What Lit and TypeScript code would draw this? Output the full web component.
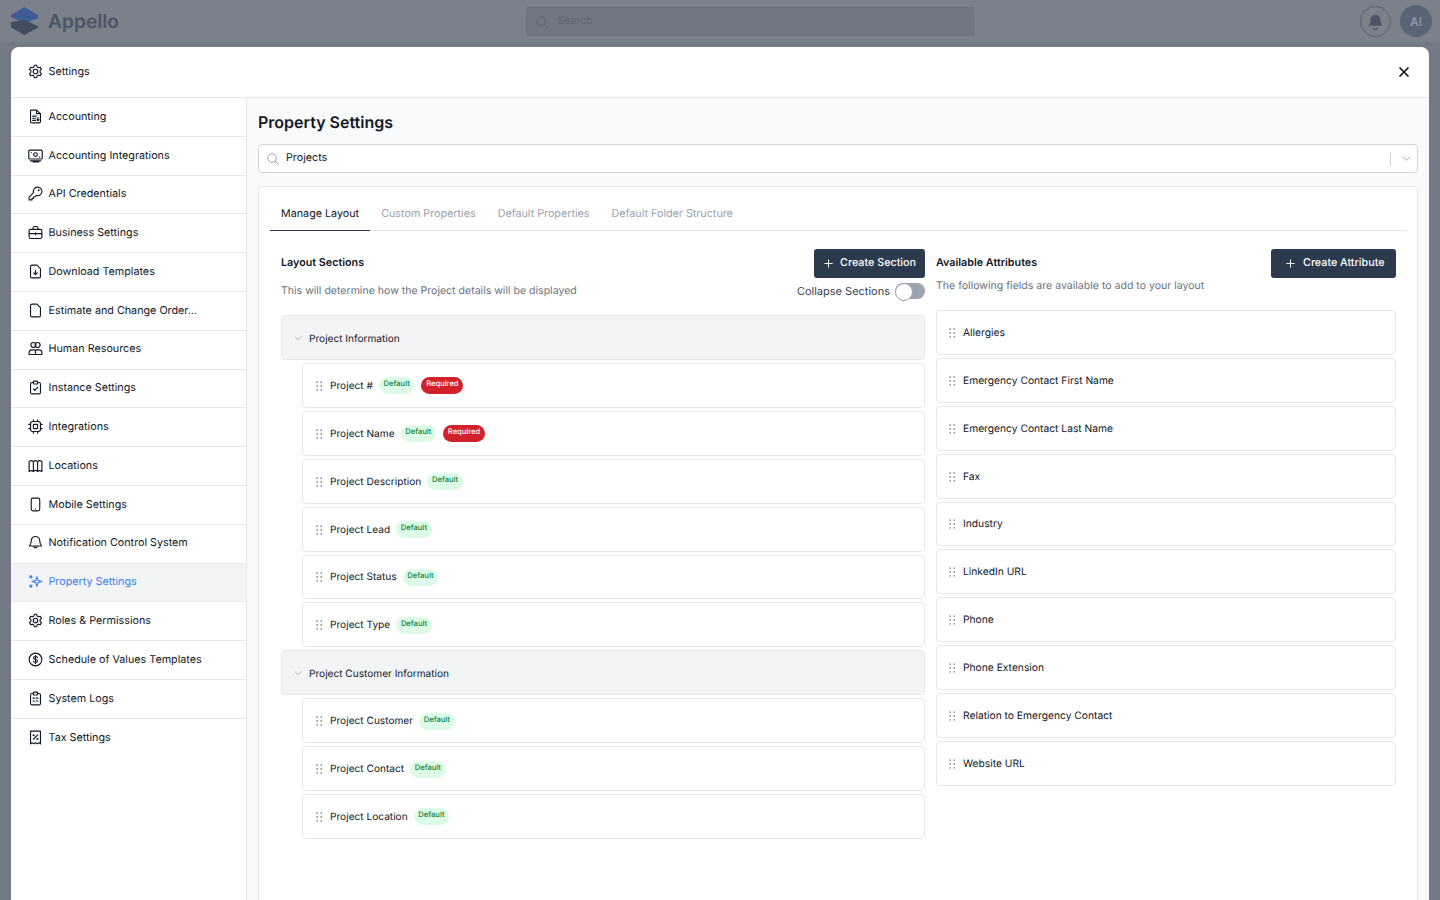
import { LitElement, css, html, svg } from "lit";
import { customElement } from "lit/decorators.js";

const icons: Record<string, unknown> = {
  gear: svg`<path d="M10.300 3.200h3.400l.6 2.600 1.900 1 2.500-.8 1.700 3-1.900 1.800v2.400l1.900 1.800-1.700 3-2.500-.8-1.900 1-.6 2.600h-3.400l-.6-2.600-1.900-1-2.500.8-1.700-3 1.900-1.800v-2.400L3.600 9l1.700-3 2.500.8 1.900-1z"/><circle cx="12" cy="12" r="3.200"/>`,
  doc: svg`<path d="M5.500 3h8l5.500 5v11a2 2 0 0 1-2 2H7a2 2 0 0 1-2-2V3.500z"/><path d="M13.500 3.500V8H19M8 11.500h5M8 14.500h4M8 17.500h4M15.500 13v5M14 16.500l1.500 1.500 1.500-1.500"/>`,
  screen: svg`<rect x="2.500" y="4.500" width="19" height="12.500" rx="1.500"/><circle cx="12" cy="10.700" r="2.600"/><path d="M6 7.500v0M18 14v0M4.500 19.500h15M8.500 21h8"/>`,
  key: svg`<path d="M15 3a6 6 0 1 1-1.800 11.700L11 17H9v2H7v2H3v-3.800l6.300-6.300A6 6 0 0 1 15 3z"/><circle cx="16.500" cy="7.500" r=".6"/>`,
  case: svg`<rect x="3" y="7.500" width="18" height="13" rx="2"/><path d="M8.500 7.500V5.500a2 2 0 0 1 2-2h3a2 2 0 0 1 2 2v2M3 13.500h18M12 12.500v2.500"/>`,
  download: svg`<path d="M7 3h7l5 5v11a2 2 0 0 1-2 2H7a2 2 0 0 1-2-2V5a2 2 0 0 1 2-2z"/><path d="M12 10.500v6M9.500 14l2.500 2.500 2.500-2.500"/>`,
  file: svg`<path d="M7 3h7l5 5v11a2 2 0 0 1-2 2H7a2 2 0 0 1-2-2V5a2 2 0 0 1 2-2z"/>`,
  people: svg`<circle cx="9" cy="7" r="3.500"/><circle cx="15" cy="7" r="3.500"/><path d="M3 20.500v-2.500a4 4 0 0 1 4-4h3a3 3 0 0 1 2 1 3 3 0 0 1 2-1h3a4 4 0 0 1 4 4v2.500zM12 15v5.500"/>`,
  clipboard: svg`<path d="M9 5H7a2 2 0 0 0-2 2v12a2 2 0 0 0 2 2h10a2 2 0 0 0 2-2V7a2 2 0 0 0-2-2h-2"/><rect x="9" y="3" width="6" height="4" rx="1"/><path d="M9 14l2 2 4-4"/>`,
  chip: svg`<rect x="5" y="5" width="14" height="14" rx="3"/><rect x="9" y="9" width="6" height="6" rx="1"/><path d="M9 2.500V5M15 2.500V5M9 19v2.500M15 19v2.500M2.500 9H5M2.500 15H5M19 9h2.500M19 15h2.500"/>`,
  map: svg`<path d="M3 6.500c2.500-2 4-2 6 0v14c-2-2-3.500-2-6 0zM9 6.500c2-2 4-2 6 0v14c-2-2-4-2-6 0zM15 6.500c2-2 3.500-2 6 0v14c-2.500-2-4-2-6 0z"/>`,
  phone: svg`<rect x="6" y="3" width="12" height="18" rx="2.500"/><path d="M12 18.200v0"/>`,
  bell: svg`<path d="M12 3.500a6 6 0 0 0-6 6c0 5-2.500 6.500-2.500 7.500h17c0-1-2.500-2.500-2.500-7.500a6 6 0 0 0-6-6zM9.500 17a2.500 2.500 0 0 0 5 0"/>`,
  spark: svg`<path d="M14 5l1.600 5.400L21 12l-5.400 1.600L14 19l-1.600-5.400L7 12l5.400-1.600z"/><circle cx="5.500" cy="5.500" r="1.500" fill="currentColor"/><circle cx="5.500" cy="18.500" r="1.500" fill="currentColor"/>`,
  dollar: svg`<circle cx="12" cy="12" r="9"/><path d="M14.800 9.200c-.4-1-1.500-1.500-2.800-1.500-1.600 0-2.800.8-2.800 2.100 0 3 5.700 1.500 5.700 4.400 0 1.300-1.300 2.100-2.900 2.100-1.400 0-2.500-.6-2.900-1.600M12 6v12"/>`,
  logs: svg`<path d="M9 5H7a2 2 0 0 0-2 2v12a2 2 0 0 0 2 2h10a2 2 0 0 0 2-2V7a2 2 0 0 0-2-2h-2"/><rect x="9" y="3" width="6" height="4" rx="1"/><path d="M8.500 11.500h2M13 11.500h2.500M8.500 15.500h2M13 15.500h2.500"/>`,
  receipt: svg`<path d="M5 3h14v18l-2.300-1.500L14.300 21 12 19.500 9.700 21l-2.400-1.500L5 21z"/><path d="M9 14.500l6-6"/><circle cx="9.300" cy="8.800" r=".7"/><circle cx="14.700" cy="14.200" r=".7"/>`,
};

const nav: [string, string][] = [
  ["Accounting", "doc"],
  ["Accounting Integrations", "screen"],
  ["API Credentials", "key"],
  ["Business Settings", "case"],
  ["Download Templates", "download"],
  ["Estimate and Change Order...", "file"],
  ["Human Resources", "people"],
  ["Instance Settings", "clipboard"],
  ["Integrations", "chip"],
  ["Locations", "map"],
  ["Mobile Settings", "phone"],
  ["Notification Control System", "bell"],
  ["Property Settings", "spark"],
  ["Roles & Permissions", "gear"],
  ["Schedule of Values Templates", "dollar"],
  ["System Logs", "logs"],
  ["Tax Settings", "receipt"],
];

const sections = [
  {
    name: "Project Information",
    fields: [
      ["Project #", true],
      ["Project Name", true],
      ["Project Description", false],
      ["Project Lead", false],
      ["Project Status", false],
      ["Project Type", false],
    ],
  },
  {
    name: "Project Customer Information",
    fields: [
      ["Project Customer", false],
      ["Project Contact", false],
      ["Project Location", false],
    ],
  },
];

const attributes = [
  "Allergies",
  "Emergency Contact First Name",
  "Emergency Contact Last Name",
  "Fax",
  "Industry",
  "LinkedIn URL",
  "Phone",
  "Phone Extension",
  "Relation to Emergency Contact",
  "Website URL",
];

const grip = html`<svg class="grip" viewBox="0 0 7 10" fill="#8b929e">
  <circle cx="1.200" cy="1.200" r=".9" /><circle cx="5.200" cy="1.200" r=".9" />
  <circle cx="1.200" cy="5" r=".9" /><circle cx="5.200" cy="5" r=".9" />
  <circle cx="1.200" cy="8.800" r=".9" /><circle cx="5.200" cy="8.800" r=".9" />
</svg>`;

const chevron = html`<svg class="chev" viewBox="0 0 12 12" fill="none" stroke="currentColor" stroke-width="1">
  <path d="M2 4l4 4 4-4" />
</svg>`;

const plus = html`<svg class="plus" viewBox="0 0 12 12" fill="none" stroke="currentColor" stroke-width="1">
  <path d="M6 1.500v9M1.500 6h9" />
</svg>`;

const search = html`<svg class="search" viewBox="0 0 12 12" fill="none" stroke="currentColor" stroke-width="1">
  <circle cx="5" cy="5" r="4.300" /><path d="M8 8l3.700 3.700" />
</svg>`;

function icon(name: string) {
  return html`<svg class="icon" viewBox="0 0 24 24" fill="none" stroke="currentColor" stroke-width="1.600"
    stroke-linecap="round" stroke-linejoin="round">${icons[name]}</svg>`;
}

@customElement("app-root")
export class AppRoot extends LitElement {
  static styles = css`
    * {
      margin: 0;
      padding: 0;
      box-sizing: border-box;
    }

    :host {
      display: block;
      position: relative;
      height: 900px;
      overflow: hidden;
      background: #737a84;
      font-family: Inter, "Liberation Sans", sans-serif;
      font-size: 10.750px;
      color: #111827;
      text-rendering: geometricPrecision;
    }

    .top {
      height: 42px;
      display: grid;
      grid-template-columns: 515px 448px 1fr;
      align-items: center;
      padding: 0 8px 0 11px;
      background: #7a818b;
    }

    .brand {
      display: flex;
      align-items: center;
      gap: 10px;
      font-size: 19.200px;
      font-weight: 600;
      color: #4b5564;
    }

    .brand svg {
      width: 27px;
      height: 28px;
    }

    .top-search {
      height: 29px;
      margin-top: 1px;
      display: flex;
      align-items: center;
      gap: 9px;
      padding-left: 9px;
      border: 1px solid #697180;
      border-radius: 2px;
      background: #707783;
      color: #5b6472;
    }

    .top-search span {
      padding-bottom: 3px;
    }

    .top-right {
      display: flex;
      justify-content: flex-end;
      align-items: center;
      gap: 9px;
    }

    .bell {
      width: 31px;
      height: 31px;
      display: flex;
      align-items: center;
      justify-content: center;
      border: 1px solid #5b6472;
      border-radius: 50%;
      color: #4b5564;
    }

    .bell svg {
      width: 17px;
      height: 17px;
    }

    .avatar {
      width: 32px;
      height: 32px;
      display: flex;
      align-items: center;
      justify-content: center;
      border-radius: 50%;
      background: #5a6475;
      color: #8a94a3;
      font-size: 12px;
      font-weight: 600;
    }

    .modal {
      position: absolute;
      left: 11px;
      right: 11px;
      top: 47px;
      height: 900px;
      border-radius: 8px 8px 0 0;
      background: #fff;
      overflow: hidden;
    }

    .modal-head {
      height: 51px;
      display: flex;
      align-items: center;
      justify-content: space-between;
      padding: 0 18px 2px 15.500px;
      border-bottom: 1px solid #e5e7eb;
    }

    .modal-title {
      display: flex;
      align-items: center;
      gap: 5px;
    }

    .icon {
      width: 17px;
      height: 17px;
      flex: none;
    }

    .close {
      width: 14px;
      height: 14px;
      margin-top: 2px;
    }

    .modal-body {
      display: flex;
      height: 100%;
    }

    .side {
      width: 236px;
      flex: none;
      border-right: 1px solid #e5e7eb;
    }

    .side-row {
      height: 38.800px;
      display: flex;
      align-items: center;
      gap: 5px;
      padding: 0 0 1.400px 15.500px;
      border-bottom: 1px solid #e5e7eb;
    }

    .side-row:last-child {
      border-bottom: 0;
    }

    .side-row.active {
      background: #f3f4f6;
      color: #3b82f6;
    }

    .main {
      flex: 1;
      min-width: 0;
      padding: 0 11px;
      background: #f9fafb;
    }

    h1 {
      height: 46px;
      display: flex;
      align-items: center;
      padding-top: 2px;
      font-size: 16px;
      font-weight: 600;
    }

    .select {
      height: 29px;
      display: flex;
      align-items: center;
      padding-left: 8px;
      border: 1px solid #d1d5db;
      border-radius: 4px;
      background: #fff;
      color: #111827;
    }

    .search {
      width: 12px;
      height: 12px;
      color: #9ca3af;
      flex: none;
    }

    .top-search .search {
      color: #5b6472;
    }

    .select span {
      flex: 1;
      margin-left: 7px;
      padding-bottom: 3px;
    }

    .select i {
      width: 1px;
      height: 14px;
      background: #d1d5db;
    }

    .chev {
      width: 11px;
      height: 11px;
      color: #9ca3af;
    }

    .select .chev {
      margin: 0 5px 0 10px;
    }

    .card {
      margin-top: 13px;
      height: 800px;
      padding: 11px 10px 0 11px;
      border: 1px solid #e5e7eb;
      border-radius: 4px 4px 0 0;
      background: #fff;
    }

    .tabs {
      display: flex;
      height: 33px;
      border-bottom: 1px solid #e5e7eb;
    }

    .tab {
      height: 33px;
      padding: 0 11px 1.500px;
      display: flex;
      align-items: center;
      border-bottom: 1px solid transparent;
      color: #9ca3af;
    }

    .tab.on {
      color: #111827;
      border-bottom-color: #2b3a4d;
    }

    .cols {
      display: grid;
      grid-template-columns: 644px 460px;
      gap: 11px;
      padding: 18px 11px 0;
    }

    .col-head {
      display: flex;
      justify-content: space-between;
      align-items: center;
      height: 29px;
    }

    .col-title {
      font-weight: 600;
      padding-bottom: 3px;
    }

    .btn {
      height: 29px;
      display: flex;
      align-items: center;
      gap: 6px;
      padding: 0 9px 3px 9px;
      border-radius: 3px;
      background: #2b3a4d;
      color: #fff;
      font-weight: 500;
    }

    .btn.wide {
      gap: 7px;
      padding: 0 11.500px 3px 14.500px;
    }

    .plus {
      width: 11px;
      height: 11px;
      margin-top: 3px;
    }

    .col-sub {
      display: flex;
      justify-content: space-between;
      align-items: flex-start;
      font-size: 10.550px;
      color: #6b7280;
    }

    .col-sub > span {
      padding-top: 0.700px;
    }

    .left .col-sub {
      height: 37px;
      padding-top: 5px;
    }

    .right .col-sub {
      height: 32px;
    }

    .collapse {
      display: flex;
      align-items: center;
      gap: 5px;
      font-size: 11px;
      color: #374151;
    }

    .toggle {
      width: 30px;
      height: 16px;
      border-radius: 8px;
      background: #9ca3af;
    }

    .toggle::before {
      content: "";
      display: block;
      width: 16px;
      height: 16px;
      border: 1px solid #9ca3af;
      border-radius: 50%;
      background: #fff;
    }

    .section {
      height: 45px;
      display: flex;
      align-items: center;
      gap: 6px;
      margin-bottom: 3px;
      padding: 2.200px 0 0 11px;
      border: 1px solid #e5e7eb;
      border-radius: 4px;
      background: #f3f4f6;
      font-size: 10.100px;
    }

    .section .chev {
      width: 10px;
      height: 10px;
      margin-top: -2px;
    }

    .fields {
      display: flex;
      flex-direction: column;
      gap: 3px;
    }

    .fields.nested {
      padding-left: 21px;
      margin-bottom: 3px;
    }

    .field {
      height: 44.900px;
      display: flex;
      align-items: center;
      padding: 0.800px 0 0 13px;
      border: 1px solid #e5e7eb;
      border-radius: 4px;
      background: #fff;
      font-size: 10.150px;
    }

    .right .field {
      padding-left: 12px;
      font-size: 10.250px;
    }

    .grip {
      width: 7px;
      height: 10px;
      margin-right: 7px;
      flex: none;
    }

    .badge {
      height: 17px;
      display: flex;
      padding: 2px 4.700px 0;
      border-radius: 9px;
      font-size: 7.600px;
      font-weight: 500;
    }

    .default {
      margin-left: 6px;
      background: #dcfce7;
      color: #15803d;
    }

    .required {
      margin-left: 7px;
      background: #d1212a;
      color: #fff;
    }
  `;

  render() {
    return html`
      <header class="top">
        <div class="brand">
          <svg viewBox="0 0 27 28">
            <path d="M13.500 0L27 8v3L13.500 16.500 0 10V8z" fill="#3f5c96" />
            <path d="M13.500 13L27 19v1.500L13.500 28 0 20.500V15z" fill="#414c5c" />
          </svg>
          Appello
        </div>
        <div class="top-search">${search}<span>Search</span></div>
        <div class="top-right">
          <div class="bell">
            <svg viewBox="0 0 24 24" fill="currentColor">
              <path d="M12 2.500a7 7 0 0 0-7 7c0 5-2.500 7-2.500 8.500h19c0-1.500-2.500-3.500-2.500-8.500a7 7 0 0 0-7-7z" />
              <path d="M9 20.500a3 3 0 0 0 6 0" fill="none" stroke="currentColor" stroke-width="1.500" />
            </svg>
          </div>
          <div class="avatar">AI</div>
        </div>
      </header>
      <div class="modal">
        <div class="modal-head">
          <div class="modal-title">${icon("gear")}<span>Settings</span></div>
          <svg class="close" viewBox="0 0 14 14" fill="none" stroke="#111827" stroke-width="1.700">
            <path d="M2.500 2.500l9 9M11.500 2.500l-9 9" />
          </svg>
        </div>
        <div class="modal-body">
          <nav class="side">
            ${nav.map(
              ([label, name]) => html`<div class="side-row ${label === "Property Settings" ? "active" : ""}">
                ${icon(name)}<span>${label}</span>
              </div>`,
            )}
          </nav>
          <main class="main">
            <h1>Property Settings</h1>
            <div class="select">${search}<span>Projects</span><i></i>${chevron}</div>
            <div class="card">
              <div class="tabs">
                <div class="tab on">Manage Layout</div>
                <div class="tab">Custom Properties</div>
                <div class="tab">Default Properties</div>
                <div class="tab">Default Folder Structure</div>
              </div>
              <div class="cols">
                <div class="left">
                  <div class="col-head">
                    <span class="col-title">Layout Sections</span>
                    <div class="btn">${plus}Create Section</div>
                  </div>
                  <div class="col-sub">
                    <span>This will determine how the Project details will be displayed</span>
                    <div class="collapse">Collapse Sections<div class="toggle"></div></div>
                  </div>
                  ${sections.map(
                    (s) => html`
                      <div class="section">${chevron}<span>${s.name}</span></div>
                      <div class="fields nested">
                        ${s.fields.map(
                          ([name, req]) => html`<div class="field">
                            ${grip}<span>${name}</span>
                            <span class="badge default">Default</span>
                            ${req ? html`<span class="badge required">Required</span>` : ""}
                          </div>`,
                        )}
                      </div>
                    `,
                  )}
                </div>
                <div class="right">
                  <div class="col-head">
                    <span class="col-title">Available Attributes</span>
                    <div class="btn wide">${plus}Create Attribute</div>
                  </div>
                  <div class="col-sub">
                    <span>The following fields are available to add to your layout</span>
                  </div>
                  <div class="fields">
                    ${attributes.map((a) => html`<div class="field">${grip}<span>${a}</span></div>`)}
                  </div>
                </div>
              </div>
            </div>
          </main>
        </div>
      </div>
    `;
  }
}
